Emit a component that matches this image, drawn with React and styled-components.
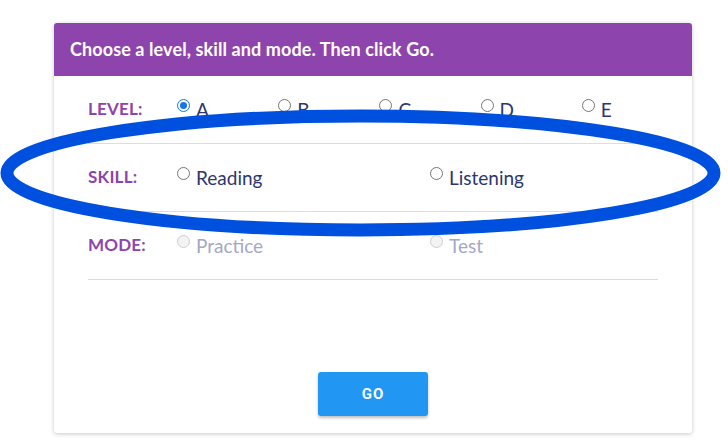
import React from "react";
import styled, { createGlobalStyle } from "styled-components";

const Global = createGlobalStyle`
  html, body { margin: 0; padding: 0; background: #fff; }
  body { font-family: Lato, "Open Sans", sans-serif; }
  #root { position: relative; width: 728px; height: 445px; }
`;

const Page = styled.div`
  padding: 23px 36px 12px 54px;
  position: relative;
  height: 445px;
  box-sizing: border-box;
`;

const Card = styled.div`
  width: 638px;
  height: 410px;
  box-sizing: border-box;
  background: #fff;
  border-radius: 3px;
  box-shadow: 0 1px 4px rgba(0, 0, 0, 0.22);
  display: flex;
  flex-direction: column;
  overflow: hidden;
`;

const Header = styled.div`
  height: 53px;
  background: #8e44ad;
  color: #fff;
  display: flex;
  align-items: center;
  padding: 0 16px 1px;
  box-sizing: border-box;
  font-size: 18px;
  font-weight: 700;
  letter-spacing: 0.1px;
`;

const Body = styled.div`
  flex: 1;
  display: flex;
  flex-direction: column;
  padding: 0 34px 17px 34px;
`;

const Row = styled.div`
  height: 68px;
  box-sizing: border-box;
  border-bottom: 1px solid #dddddd;
  display: grid;
  grid-template-columns: 89px 1fr;
  align-items: center;
`;

const Label = styled.div`
  color: #8e44ad;
  font-weight: 700;
  font-size: 17px;
  letter-spacing: 0.2px;
  margin-top: -2px;
`;

const Options = styled.div`
  display: grid;
  grid-template-columns: repeat(${(p) => p.$cols}, ${(p) => p.$w}px);
`;

const Option = styled.label`
  display: flex;
  align-items: flex-start;
  gap: 6px;
  font-size: 19px;
  color: ${(p) => (p.$disabled ? "#a4a7c8" : "#2e3570")};
  line-height: 22px;
`;

const Radio = styled.span`
  width: 13px;
  height: 13px;
  box-sizing: border-box;
  border-radius: 50%;
  margin-top: 0px;
  flex: none;
  border: 1px solid ${(p) => (p.$disabled ? "#cfcfcf" : p.$checked ? "#1a73e8" : "#767676")};
  background: ${(p) => (p.$disabled ? "#f3f3f3" : "#fff")};
  display: flex;
  align-items: center;
  justify-content: center;
  &::after {
    content: "";
    display: ${(p) => (p.$checked ? "block" : "none")};
    width: 7px;
    height: 7px;
    border-radius: 50%;
    background: #1a73e8;
  }
`;

const Spacer = styled.div`
  flex: 1;
`;

const GoButton = styled.button`
  align-self: center;
  width: 110px;
  height: 44px;
  border: none;
  border-radius: 3px;
  background: #2196f3;
  color: #fff;
  font-family: Roboto, sans-serif;
  font-weight: 700;
  font-size: 15px;
  letter-spacing: 1px;
  box-shadow: 0 2px 3px rgba(0, 0, 0, 0.25);
`;

const Overlay = styled.svg`
  position: absolute;
  left: 0;
  top: 0;
  pointer-events: none;
`;

const rows = [
  { label: "LEVEL:", cols: 5, w: 101.2, items: ["A", "B", "C", "D", "E"], checked: 0 },
  { label: "SKILL:", cols: 2, w: 253, items: ["Reading", "Listening"] },
  { label: "MODE:", cols: 2, w: 253, items: ["Practice", "Test"], disabled: true },
];

export default function App() {
  return (
    <>
      <Global />
      <Page>
        <Card>
          <Header>Choose a level, skill and mode. Then click Go.</Header>
          <Body>
            {rows.map((r) => (
              <Row key={r.label}>
                <Label>{r.label}</Label>
                <Options $cols={r.cols} $w={r.w}>
                  {r.items.map((it, i) => (
                    <Option key={it} $disabled={r.disabled}>
                      <Radio $checked={r.checked === i} $disabled={r.disabled} />
                      {it}
                    </Option>
                  ))}
                </Options>
              </Row>
            ))}
            <Spacer />
            <GoButton>GO</GoButton>
          </Body>
        </Card>
      </Page>
      <Overlay width="728" height="445" viewBox="0 0 728 445">
        <ellipse cx="360.5" cy="173" rx="353.5" ry="57" fill="none" stroke="#0050e0" strokeWidth="13" />
      </Overlay>
    </>
  );
}
